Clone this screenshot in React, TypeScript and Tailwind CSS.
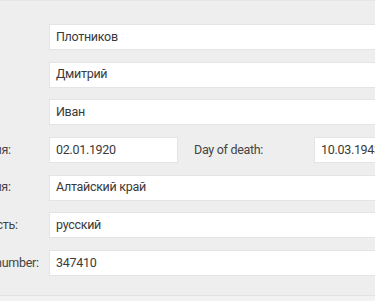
import React from "react";

const font = { fontFamily: "Roboto, 'Noto Sans', sans-serif" };

function Field({ value }: { value: string }) {
  return (
    <div className="h-[26px] flex-1 bg-white border border-[#e4e4e4] flex items-center px-[6px] text-[12.5px] tracking-[-0.3px] text-[#3a3a3a] whitespace-nowrap overflow-hidden">
      {value}
    </div>
  );
}

function Label({ text, className = "" }: { text: string; className?: string }) {
  return (
    <div className="w-[120px] shrink-0 flex">
      <span className={"text-[12.5px] tracking-[-0.3px] text-[#444] whitespace-nowrap " + className}>{text}</span>
    </div>
  );
}

export default function App() {
  return (
    <div className="w-[375px] h-[301px] overflow-hidden bg-[#f2f2f2]" style={font}>
      <div className="h-[296px] bg-[#eeeeee] border-t border-[#e6e6e6] border-b border-b-[#e2e2e2] pt-[23px]">
        <div className="ml-[-71px] w-[520px] flex flex-col gap-[11.7px]">
          <div className="flex items-center">
            <Label text="Фамилия:" />
            <Field value="Плотников" />
          </div>
          <div className="flex items-center">
            <Label text="Имя:" />
            <Field value="Дмитрий" />
          </div>
          <div className="flex items-center">
            <Label text="Отчество:" />
            <Field value="Иван" />
          </div>
          <div className="flex items-center">
            <Label text="Дата рождения:" className="-ml-[8px]" />
            <div className="w-[129px] shrink-0 flex">
              <Field value="02.01.1920" />
            </div>
            <div className="w-[16px] shrink-0" />
            <Label text="Day of death:" />
            <Field value="10.03.1943" />
          </div>
          <div className="flex items-center">
            <Label text="Место рождения:" className="-ml-[16px]" />
            <Field value="Алтайский край" />
          </div>
          <div className="flex items-center">
            <Label text="Национальность:" className="-ml-[9px]" />
            <Field value="русский" />
          </div>
          <div className="flex items-center">
            <Label text="Registration number:" />
            <Field value="347410" />
          </div>
        </div>
      </div>
    </div>
  );
}
